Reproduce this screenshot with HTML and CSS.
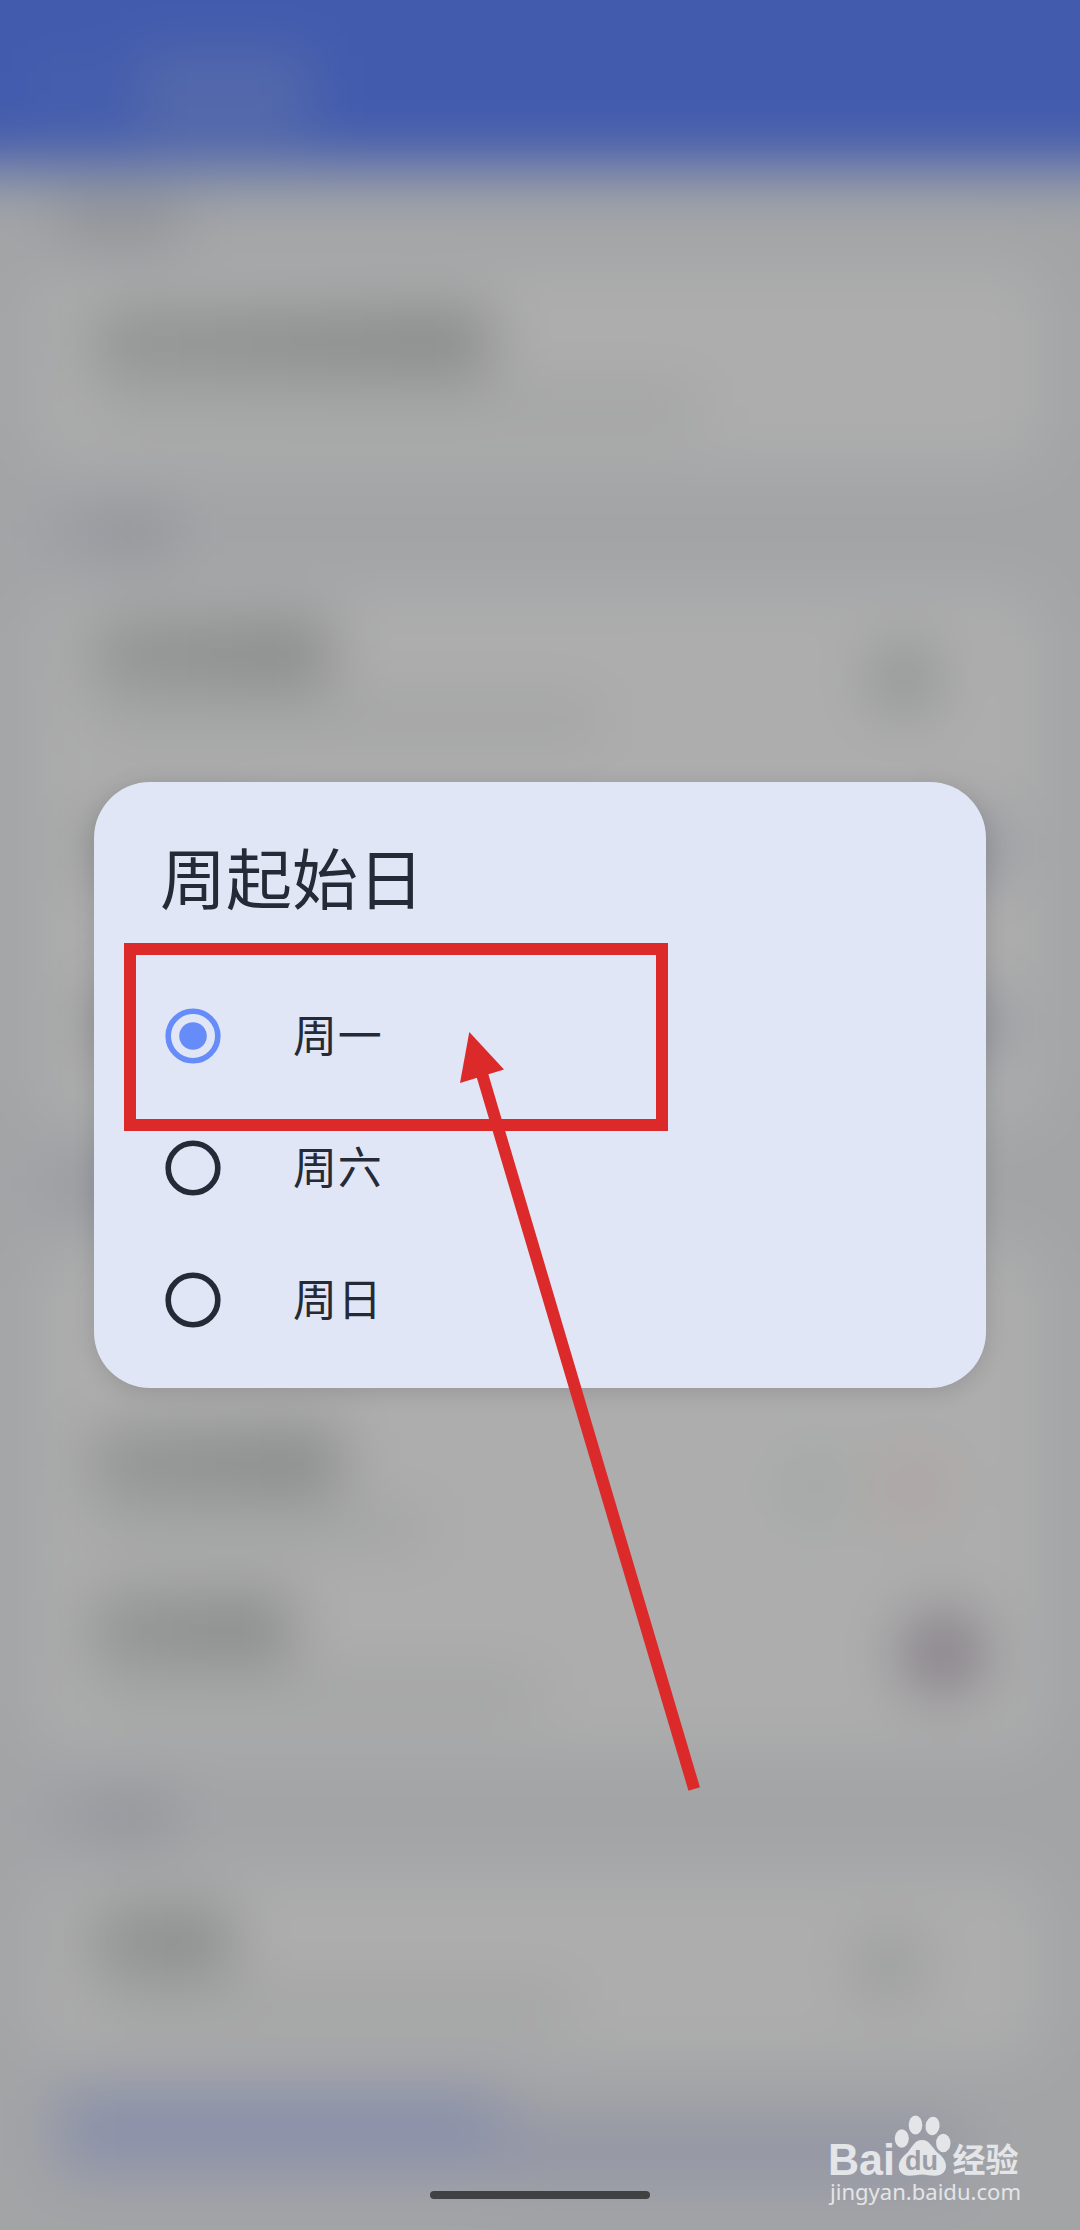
FILE: index.html
```
<!DOCTYPE html>
<html lang="zh-CN">
<head>
<meta charset="utf-8">
<title>周起始日</title>
<link rel="stylesheet" href="styles.css">
</head>
<body>
<div class="screen">
  <div class="backdrop" aria-hidden="true">
    <div class="appbar"><i class="back"></i><i class="heading"></i></div>
    <div class="label label-first"><i class="dim"></i></div>
    <div class="card card-1">
      <div class="row"><div class="copy"><i class="name w-400"></i><i class="sub w-610"></i></div></div>
    </div>
    <div class="label"><i></i></div>
    <div class="card card-2">
      <div class="row"><div class="copy"><i class="name w-240"></i><i class="sub w-510"></i></div><i class="knob"></i></div>
      <div class="row"><div class="copy"><i class="name w-160"></i></div><i class="knob knob-accent"></i></div>
      <div class="row"><div class="copy"><i class="name w-160"></i></div><i class="knob knob-accent"></i></div>
    </div>
    <div class="label"><i></i></div>
    <div class="card card-3">
      <div class="row"></div>
      <div class="row"><div class="copy"><i class="name w-250"></i><i class="sub w-340"></i></div><i class="knob green"></i><i class="knob red"></i></div>
      <div class="row"><div class="copy"><i class="name w-200"></i><i class="sub w-450"></i></div><i class="knob plum"></i></div>
    </div>
    <div class="label"><i></i></div>
    <div class="card card-4">
      <div class="row"><div class="copy"><i class="name w-140"></i><i class="sub w-480"></i></div><i class="knob soft"></i></div>
    </div>
    <div class="links"><i class="link-main"></i><i class="link-more"></i></div>
  </div>

  <main class="dialog" role="dialog" aria-labelledby="dialog-title">
    <h1 class="title" id="dialog-title">周起始日</h1>
    <div class="options" role="radiogroup">
      <div class="option" role="radio" aria-checked="true">
        <svg class="radio checked" viewBox="0 0 56 56"><circle class="ring" cx="28" cy="28" r="24.8"/><circle class="dot" cx="28" cy="28" r="13.8"/></svg>
        <span class="day">周一</span>
      </div>
      <div class="option" role="radio" aria-checked="false">
        <svg class="radio" viewBox="0 0 56 56"><circle class="ring" cx="28" cy="28" r="24.8"/></svg>
        <span class="day">周六</span>
      </div>
      <div class="option" role="radio" aria-checked="false">
        <svg class="radio" viewBox="0 0 56 56"><circle class="ring" cx="28" cy="28" r="24.8"/></svg>
        <span class="day">周日</span>
      </div>
    </div>
  </main>

  <svg class="annotation" viewBox="0 0 1080 2230">
    <rect x="130" y="949" width="532" height="176" fill="none" stroke="#dc2a2a" stroke-width="12"/>
    <path d="M482 1074 694.2 1789" stroke="#dc2a2a" stroke-width="12"/>
    <path d="M469.3 1032 504 1069.5 460 1083Z" fill="#dc2a2a"/>
  </svg>

  <svg class="watermark" viewBox="0 0 210 100">
    <g fill="#e4e5e8">
      <text class="wm-bai" x="8" y="54.500" textLength="67" lengthAdjust="spacingAndGlyphs">Bai</text>
      <ellipse cx="81.8" cy="18.5" rx="7" ry="9.3"/>
      <ellipse cx="95.5" cy="5" rx="6.8" ry="9.5"/>
      <ellipse cx="112.6" cy="6" rx="7" ry="9.3" transform="rotate(8 112.6 6)"/>
      <ellipse cx="123.3" cy="23" rx="7.2" ry="9.3"/>
      <path d="M102 20C110 20 112 28 118 33C126 39 128 47 124 52C119 58 110 55 102 54.500C94 55 85 58 80.500 52C76 45 81 38 87 33C92 28 94 20 102 20Z"/>
      <text class="wm-cn" x="132.500" y="52" textLength="66" lengthAdjust="spacingAndGlyphs">经验</text>
      <text class="wm-url" x="10" y="79.500" textLength="191" lengthAdjust="spacingAndGlyphs">jingyan.baidu.com</text>
    </g>
    <text class="wm-du" x="85" y="50" textLength="33" lengthAdjust="spacingAndGlyphs">du</text>
  </svg>
  <div class="home-bar"></div>
</div>
</body>
</html>
```
FILE: styles.css
```
* { box-sizing: border-box; }
html, body { margin: 0; }

.screen {
  position: relative;
  display: flex;
  flex-direction: column;
  width: 1080px;
  height: 2230px;
  padding: 782px 94px 0;
  overflow: hidden;
  background: #a2a4a6;
  font-family: "Noto Sans CJK SC", sans-serif;
  color: #252a36;
}

/* Settings page behind the dialog: dimmed and out of focus */
.backdrop {
  position: absolute;
  inset: -100px;
  display: flex;
  flex-direction: column;
  background: #a2a4a6;
  filter: blur(30px);
}
.backdrop i { display: block; flex: none; }

.appbar {
  display: flex;
  align-items: center;
  gap: 45px;
  height: 268px;
  padding: 120px 140px 0;
  background: #425bad;
}
.back { width: 50px; height: 50px; background: #4a63ae; }
.heading { width: 175px; height: 78px; background: #566bab; }

.label {
  display: flex;
  align-items: center;
  height: 120px;
  padding: 10px 160px 0;
}
.label-first { height: 97px; }
.label i { width: 110px; height: 46px; background: linear-gradient(90deg, #989ca6, #8e8f92); }
.label .dim { width: 120px; background: #8e9096; }

.card {
  display: grid;
  margin: 0 135px;
  border-radius: 40px;
  background: #adadad;
}
.card-1 { height: 205px; }
.card-2 { height: 535px; grid-template-rows: 180px 160px 195px; }
.card-3 { height: 510px; grid-template-rows: 164px 162px 184px; }
.card-3 .row:last-child { padding-bottom: 14px; }
.card-4 { height: 190px; }

.row {
  display: flex;
  align-items: center;
  padding: 0 47px 0 55px;
}
.copy { display: grid; gap: 18px; margin-right: auto; }
.name { height: 64px; background: linear-gradient(90deg, #929393, #878888); }
.sub { height: 32px; background: #a0a1a1; }
.w-140 { width: 140px; }
.w-160 { width: 160px; }
.w-200 { width: 200px; }
.w-240 { width: 240px; }
.w-250 { width: 250px; }
.w-340 { width: 340px; }
.w-400 { width: 400px; }
.w-450 { width: 450px; }
.w-480 { width: 480px; }
.w-610 { width: 610px; }
.w-510 { width: 510px; }

.knob { width: 68px; height: 68px; margin-right: 60px; border-radius: 50%; background: #8f9191; }
.knob-accent { margin-right: -5px; background: #8c8e9a; }
.knob.green { margin-right: 32px; background: #a1a8a5; }
.knob.red { margin-right: 50px; background: #b0a4a1; }
.knob.plum { width: 84px; height: 84px; margin-right: 13px; background: #857f87; }
.knob.soft { margin-right: 75px; background: #999b9a; }

.links {
  display: flex;
  align-items: flex-start;
  height: 270px;
  padding: 30px 160px;
}
.link-main { width: 440px; height: 78px; background: #898faa; }
.link-more { width: 460px; height: 62px; margin-top: 30px; background: #9396a5; }

.dialog {
  position: relative;
  width: 892px;
  height: 606px;
  padding: 45px 66px 0;
  border-radius: 56px;
  background: #e0e6f5;
  box-shadow: 0 4px 22px rgba(0, 0, 0, .13);
}
.title {
  margin: 0;
  font-size: 66px;
  font-weight: 400;
  line-height: 96px;
}
.options { margin-top: 47px; }
.option {
  display: flex;
  align-items: center;
  gap: 72px;
  height: 132px;
  padding-left: 5px;
  font-size: 44px;
  letter-spacing: .8px;
}
.day { padding-bottom: 6px; }
.radio { width: 56px; height: 56px; color: #252a36; }
.radio.checked { color: #668cfa; }
.ring { fill: none; stroke: currentColor; stroke-width: 5.6; }
.dot { fill: currentColor; }

/* Marks drawn over the screen */
.annotation { position: absolute; inset: 0; width: 1080px; height: 2230px; }
.watermark {
  position: absolute;
  left: 820px;
  top: 2120px;
  width: 210px;
  height: 100px;
  overflow: visible;
}
.wm-bai { font: 700 44px "Liberation Sans", sans-serif; }
.wm-du { font: 700 28px "Liberation Sans", sans-serif; fill: #9b9da5; }
.wm-cn { font: 700 33px "Noto Sans CJK SC", sans-serif; }
.wm-url { font: 400 22px "Noto Sans", sans-serif; }

.home-bar {
  position: absolute;
  left: 430px;
  bottom: 31px;
  width: 220px;
  height: 8px;
  border-radius: 4px;
  background: #404143;
}
```
